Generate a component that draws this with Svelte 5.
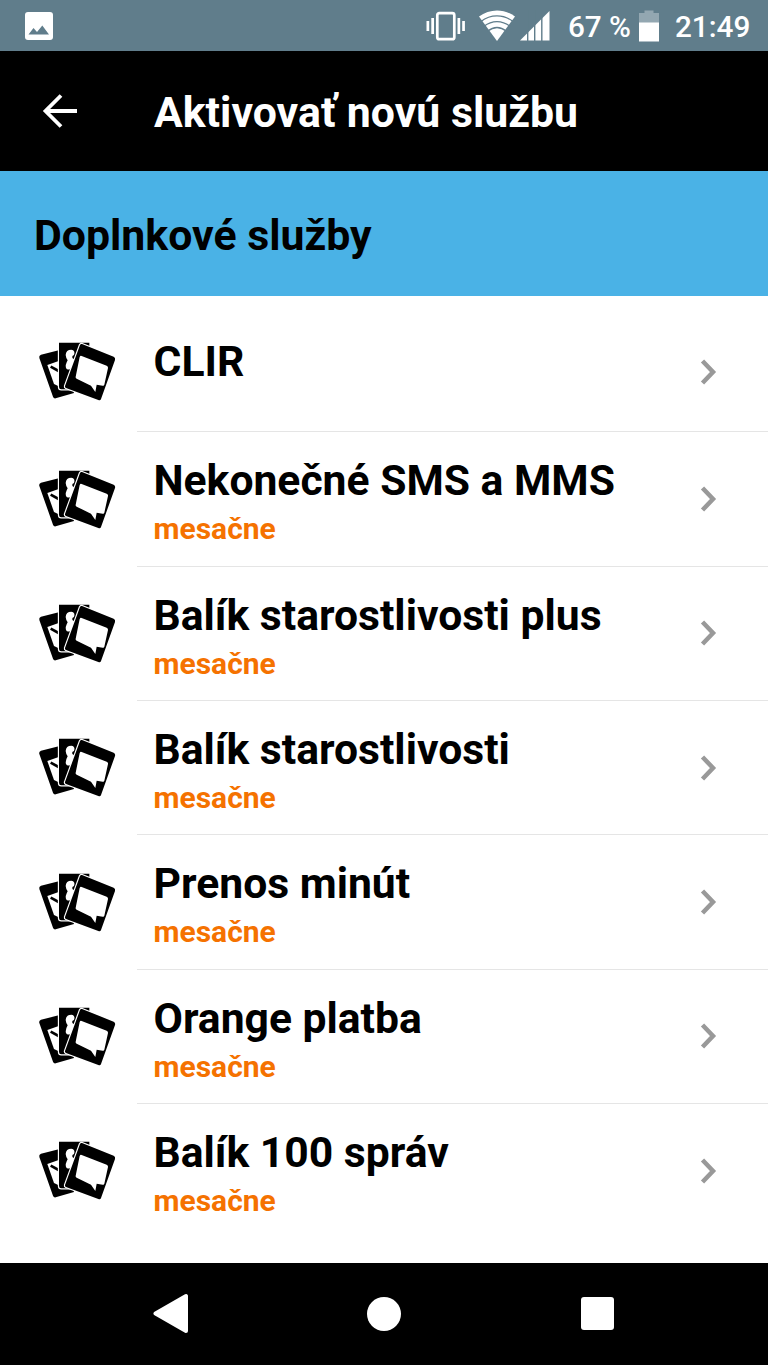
<script lang="ts">
  type Service = { name: string; period?: string };

  const services: Service[] = [
    { name: "CLIR" },
    { name: "Nekonečné SMS a MMS", period: "mesačne" },
    { name: "Balík starostlivosti plus", period: "mesačne" },
    { name: "Balík starostlivosti", period: "mesačne" },
    { name: "Prenos minút", period: "mesačne" },
    { name: "Orange platba", period: "mesačne" },
    { name: "Balík 100 správ", period: "mesačne" }
  ];
</script>

<div class="screen">
  <div class="status">
    <svg class="picture" width="28" height="28" viewBox="0 0 28 28">
      <rect width="28" height="28" rx="3" fill="#fff" />
      <path d="M3.500 22.500 8.500 16l3.500 4 5.300-6.500 6.700 9z" fill="#607d8b" />
    </svg>

    <svg class="vibrate" width="40" height="30" viewBox="0 0 40 30" fill="#fff">
      <path d="M0.5 10h2.700v10H0.500zM5.300 7H8v16H5.300zM31.500 7h2.700v16h-2.700zM36.200 10h2.700v10h-2.700z" />
      <rect x="11.300" y="2.200" width="17" height="26" rx="2" fill="none" stroke="#fff" stroke-width="2.700" />
    </svg>

    <svg class="wifi" width="38" height="32" viewBox="0 0 38 32">
      <path d="M1 6.500C11.500-1.500 26.500-1.500 37 6.500L19 31z" fill="#fff" />
      <g fill="none" stroke="#607d8b" stroke-width="1.300">
        <path d="M3 11.500C12.500 4 25.500 4 35 11.500" />
        <path d="M6 16.300C14 10 24 10 32 16.300" />
        <path d="M9.500 21.300C15.500 16.500 22.500 16.500 28.500 21.300" />
      </g>
    </svg>

    <svg class="signal" width="30" height="31" viewBox="0 0 30 31">
      <path d="M0 30.500 29.500 1v29.500z" fill="#fff" />
      <path d="M7.700 0v31M14.700 0v31M21.800 0v31" stroke="#607d8b" stroke-width="1.400" />
    </svg>

    <span class="percent">67 %</span>

    <svg class="battery" width="20" height="32" viewBox="0 0 20 32">
      <path d="M5.500 0.500h9V3H20v10H0V3h5.500z" fill="#93a7b1" />
      <path d="M0 12.500h20v19H0z" fill="#fff" />
    </svg>

    <span class="clock">21:49</span>
  </div>

  <header>
    <svg width="36" height="36" viewBox="0 0 36 36" fill="none" stroke="#fff" stroke-width="3.800">
      <path d="M19 2.500 3.500 18 19 33.500M3 18H35" />
    </svg>
    <h1>Aktivovať novú službu</h1>
  </header>

  <h2>Doplnkové služby</h2>

  <ul>
    {#each services as service}
      <li class:single={!service.period}>
        <svg class="cards" width="100" height="75" viewBox="0 0 300 225">
          <path d="M28 69Q26 62 33 59L98 43 132 174 77 190Q71 191 69 185z" fill="#000" />
          <path d="M52 90 86 78v76l-14-7z" fill="#fff" />
          <path d="M62 95l24 13" stroke="#000" stroke-width="8" />
          <path class="edge" d="M87 23h91v140H94q-7 0-7-7z" />
          <path
            d="M124 44Q108 44 107 60 108 70 113 76 105 90 108 99 112 107 122 101L139 68Q131 76 127 68 125 62 132 60 137 46 124 44z"
            fill="#fff"
          />
          <path
            class="edge"
            d="M156 27 251 65Q257 68 255 75L213 192Q211 198 205 195L108 159Q104 157 105 153L150 30Q152 26 156 27z"
          />
          <path
            d="M155 63 230 92Q235 94 234 99L223 149Q222 153 218 152L200 149 196 171 183 152 140 131Q136 129 137 125L149 66Q151 61 155 63z"
            fill="#fff"
          />
        </svg>
        <div class="text">
          <strong>{service.name}</strong>
          {#if service.period}
            <span>{service.period}</span>
          {/if}
        </div>
        <div class="more">
          <svg width="18" height="26" viewBox="0 0 18 26">
            <path d="M2.500 2 13 13 2.500 24" fill="none" stroke="#999" stroke-width="4.500" />
          </svg>
        </div>
      </li>
    {/each}
  </ul>

  <nav>
    <svg width="36" height="42" viewBox="0 0 36 42">
      <path
        d="M2.500 20.500 33 3v35z"
        fill="#fff"
        stroke="#fff"
        stroke-width="4"
        stroke-linejoin="round"
      />
    </svg>
    <span class="home"></span>
    <span class="recent"></span>
  </nav>
</div>

<style>
  :global(body) {
    margin: 0;
    background: #fff;
    font-family: Roboto, "Noto Sans", sans-serif;
  }

  svg {
    display: block;
    flex: none;
  }

  .screen {
    display: flex;
    flex-direction: column;
    width: 768px;
    height: 1365px;
    overflow: hidden;
    background: #fff;
  }

  .status {
    display: flex;
    align-items: center;
    height: 51px;
    box-sizing: border-box;
    padding: 0 17px 0 25px;
    background: #607d8b;
    color: #fff;
    font-size: 29.700px;
    font-weight: 500;
    white-space: nowrap;
  }

  .vibrate {
    margin-left: auto;
  }

  .wifi {
    margin-left: 12px;
  }

  .signal {
    margin-left: 4px;
  }

  .percent {
    width: 63px;
    margin-left: 18px;
    padding-top: 1px;
  }

  .battery {
    margin-left: 8px;
  }

  .clock {
    width: 76px;
    margin-left: 16px;
    padding-top: 1px;
  }

  header {
    display: flex;
    align-items: center;
    gap: 76px;
    height: 119.500px;
    padding-left: 42px;
    background: #000;
    color: #fff;
  }

  h1,
  h2 {
    margin: 0;
    font-size: 42.800px;
    font-weight: 700;
    line-height: 50px;
    white-space: nowrap;
  }

  h1 {
    padding-top: 2px;
  }

  h2 {
    box-sizing: border-box;
    height: 125.500px;
    padding: 39.500px 34px 0;
    background: #4ab2e6;
  }

  ul {
    flex: 1;
    margin: 0;
    padding: 16px 0 0;
    list-style: none;
  }

  li {
    display: flex;
    align-items: center;
    height: 134.350px;
    padding-left: 30px;
  }

  li.single {
    height: 120.400px;
  }

  .cards {
    margin-top: 1px;
  }

  .edge {
    fill: #000;
    stroke: #fff;
    stroke-width: 7;
    paint-order: stroke;
  }

  .text,
  .more {
    align-self: stretch;
    display: flex;
    box-sizing: border-box;
    border-bottom: 1px solid #e5e5e5;
  }

  .text {
    flex: 1;
    flex-direction: column;
    margin-left: 7px;
    padding: 23px 0 0 16.500px;
    white-space: nowrap;
  }

  li.single .text {
    padding-top: 23.500px;
  }

  .text strong {
    font-size: 42.650px;
    line-height: 50px;
  }

  .text span {
    margin-top: 6px;
    color: #f57200;
    font-size: 30px;
    font-weight: 700;
    line-height: 35px;
  }

  .more {
    align-items: center;
    width: 68px;
  }

  li:last-child .text,
  li:last-child .more {
    border-bottom-color: transparent;
  }

  nav {
    display: flex;
    align-items: center;
    justify-content: space-between;
    box-sizing: border-box;
    height: 102.500px;
    padding: 0 154px 0 153px;
    background: #000;
  }

  .home {
    width: 34px;
    height: 34px;
    margin-right: 2px;
    border-radius: 50%;
    background: #fff;
  }

  .recent {
    width: 33px;
    height: 33px;
    border-radius: 3px;
    background: #fff;
  }
</style>
